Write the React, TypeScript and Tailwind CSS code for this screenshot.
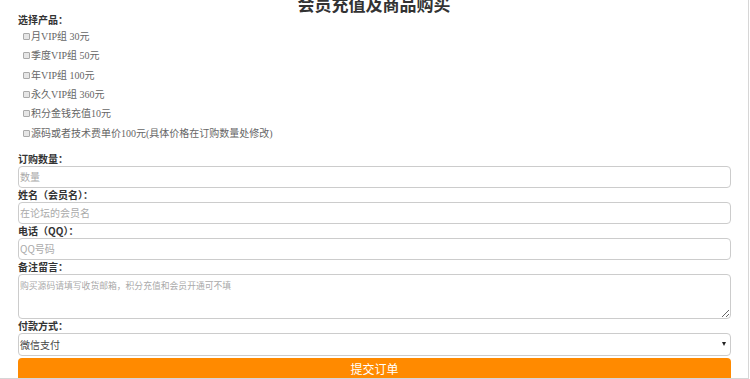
import React from "react";

const products = [
  "月VIP组 30元",
  "季度VIP组 50元",
  "年VIP组 100元",
  "永久VIP组 360元",
  "积分金钱充值10元",
  "源码或者技术费单价100元(具体价格在订购数量处修改)",
];

const sans = "font-['Microsoft_YaHei','Noto_Sans_CJK_SC',sans-serif]";

const Label = ({ children }: { children: React.ReactNode }) => (
  <div className={`h-[14px] text-[10px] leading-[14px] font-bold text-[#333] ${sans}`}>{children}</div>
);

export default function App() {
  return (
    <div className="w-[749px] h-[379px] overflow-hidden bg-white border-r border-b border-[#d6d6d6]">
      <h1
        className={`mt-[-5px] h-[18px] text-center text-[17px] leading-[18px] font-bold text-[#333] ${sans}`}
      >
        会员充值及商品购买
      </h1>

      <div className="pl-[18px] w-[731px]">
        <Label>选择产品：</Label>
        <div className="flex flex-col">
          {products.map((p) => (
            <label
              key={p}
              className="flex items-center h-[19.3px] pl-[5px] text-[10px] text-[#666] font-['Liberation_Serif','Noto_Sans_CJK_SC',serif]"
            >
              <span className="w-[7px] h-[7px] mr-[1px] border border-[#aaa] bg-[#e6e6e6] rounded-[1px]" />
              {p}
            </label>
          ))}
        </div>

        <div className="mt-[9px]">
          <Label>订购数量：</Label>
        </div>
        <input
          placeholder="数量"
          className={`block w-full h-[22px] px-[1px] border border-[#ccc] rounded-[4px] text-[10px] text-[#555] placeholder:text-[#aaa] outline-none ${sans}`}
        />
        <Label>姓名（会员名）：</Label>
        <input
          placeholder="在论坛的会员名"
          className={`block w-full h-[22px] px-[1px] border border-[#ccc] rounded-[4px] text-[10px] text-[#555] placeholder:text-[#aaa] outline-none ${sans}`}
        />
        <Label>电话（QQ）：</Label>
        <input
          placeholder="QQ号码"
          className={`block w-full h-[22px] px-[1px] border border-[#ccc] rounded-[4px] text-[10px] text-[#555] placeholder:text-[#aaa] outline-none ${sans}`}
        />
        <Label>备注留言：</Label>
        <textarea
          placeholder="购买源码请填写收货邮箱，积分充值和会员开通可不填"
          className={`block w-full h-[45px] px-[1px] pt-[4px] border border-[#ccc] rounded-[4px] text-[8.8px] text-[#555] placeholder:text-[#aaa] outline-none ${sans}`}
        />
        <Label>付款方式：</Label>
        <div
          className={`flex items-center justify-between h-[23px] pl-[1px] pr-[4px] border border-[#ccc] rounded-[4px] text-[10px] text-[#444] ${sans}`}
        >
          <span>微信支付</span>
          <span className="w-0 h-0 border-l-[2.5px] border-r-[2.5px] border-t-[4px] border-l-transparent border-r-transparent border-t-[#222]" />
        </div>
        <button
          className={`mt-[2px] w-full h-[21px] rounded-t-[4px] bg-[#ff8a00] text-white text-[12px] leading-[21px] ${sans}`}
        >
          提交订单
        </button>
      </div>
    </div>
  );
}
